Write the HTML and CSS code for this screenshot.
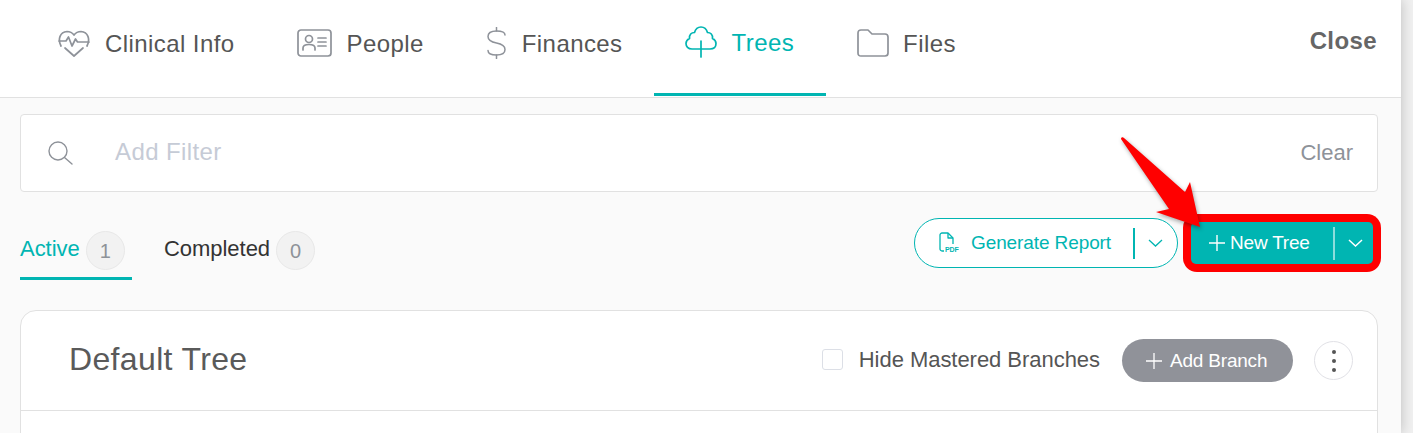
FILE: index.html
```html
<!DOCTYPE html>
<html lang="en">
<head>
    <meta charset="UTF-8">
    <meta name="viewport" content="width=device-width, initial-scale=1.0">
    <title>Trees</title>
    <link rel="stylesheet" href="styles.css">
</head>
<body>
    <div class="panel">
        <div class="topbar">
            <div class="nav">
                <a class="nav-item">
                    <svg class="nav-icon" width="32" height="32" viewBox="0 0 32 32" fill="none" stroke="currentColor" stroke-width="1.7" stroke-linejoin="round" stroke-linecap="round">
                        <path d="M3 19 C-0.5 12 2 5 9 4.5 C12 4.5 14.5 6 16 8 C17.5 6 20 4.5 23 4.5 C30 5 32.5 12 29 19"/>
                        <path d="M1 14 H8 L10.5 10 L14 19 L17.5 12 L19.5 15 H31"/>
                        <path d="M7 21 L16 29 L25 21"/>
                    </svg>
                    <span>Clinical Info</span>
                </a>
                <a class="nav-item">
                    <svg class="nav-icon" width="35" height="28" viewBox="0 0 35 28" fill="none" stroke="currentColor" stroke-width="1.7" stroke-linecap="round">
                        <rect x="1" y="1" width="33" height="26" rx="3"/>
                        <circle cx="12" cy="10" r="3.5"/>
                        <path d="M6 21 V19 C6 16 9 15.5 12 15.5 C15 15.5 18 16 18 19 V21"/>
                        <path d="M21 9 H29 M21 13 H29 M21 17 H29"/>
                    </svg>
                    <span>People</span>
                </a>
                <a class="nav-item">
                    <svg class="nav-icon" width="21" height="32" viewBox="0 0 21 32" fill="none" stroke="currentColor" stroke-width="1.5" stroke-linecap="round">
                        <path d="M19 8 C19 5 15 4 10.5 4 C5 4 2 6 2 9.5 C2 13 5 15 10.5 16 C16 17 19 19 19 22.5 C19 26 16 28 10.5 28 C5 28 2 26.5 2 23.5"/>
                        <path d="M10.5 0.5 V4 M10.5 28 V31.5"/>
                    </svg>
                    <span>Finances</span>
                </a>
                <a class="nav-item active">
                    <svg class="nav-icon" width="32" height="32" viewBox="0 0 32 32" fill="none" stroke="currentColor" stroke-width="1.7" stroke-linecap="round" stroke-linejoin="round">
                        <path d="M16 23 H7 C3 23 1 20.5 1 17.5 C1 15 2.5 13.5 4.5 12.5 C4 8.5 6.5 6.5 9.5 6.5 C10.5 3 13 1 16 1 C19 1 21.5 3 22.5 6.5 C25.5 6.5 28 8.5 27.5 12.5 C29.5 13.5 31 15 31 17.5 C31 20.5 29 23 25 23 H16"/>
                        <path d="M16 15 V31"/>
                    </svg>
                    <span>Trees</span>
                </a>
                <a class="nav-item">
                    <svg class="nav-icon" width="32" height="28" viewBox="0 0 32 28" fill="none" stroke="currentColor" stroke-width="1.7" stroke-linejoin="round">
                        <path d="M1 4 C1 2 2 1 4 1 H11 L15 5 H28 C30 5 31 6 31 8 V24 C31 26 30 27 28 27 H4 C2 27 1 26 1 24 Z"/>
                    </svg>
                    <span>Files</span>
                </a>
            </div>
            <a class="close-link">Close</a>
        </div>

        <div class="content">
            <div class="filter-box">
                <svg class="search-icon" width="25" height="24" viewBox="0 0 25 24" fill="none" stroke="currentColor" stroke-width="1.4" stroke-linecap="round">
                    <circle cx="10" cy="10" r="9"/>
                    <path d="M16.5 16.5 L24 23"/>
                </svg>
                <span class="filter-text">Add Filter</span>
                <span class="clear-link">Clear</span>
            </div>

            <div class="toolbar">
                <div class="sub-tabs">
                    <div class="sub-tab active">Active <span class="count">1</span></div>
                    <div class="sub-tab">Completed <span class="count">0</span></div>
                </div>
                <div class="actions">
                    <div class="btn btn-report">
                        <svg class="pdf-icon" width="20" height="22" viewBox="0 0 20 22" fill="none" stroke="currentColor" stroke-width="1.3" stroke-linejoin="round">
                            <path d="M5 19 H3 C2 19 1 18 1 17 V3 C1 2 2 1 3 1 H9 L14 6 V12"/>
                            <path d="M9 1 V6 H14"/>
                            <text x="6" y="19.5" class="pdf-label">PDF</text>
                        </svg>
                        <span class="btn-label">Generate Report</span>
                        <span class="btn-sep"></span>
                        <svg class="chevron" width="15" height="8" viewBox="0 0 15 8" fill="none" stroke="currentColor" stroke-width="1.3"><path d="M1 1 L7.5 7 L14 1"/></svg>
                    </div>
                    <div class="new-tree-wrap">
                        <div class="btn btn-new">
                            <svg class="plus" width="16" height="16" viewBox="0 0 16 16" stroke="currentColor" stroke-width="1.4"><path d="M8 0 V16 M0 8 H16"/></svg>
                            <span class="btn-label">New Tree</span>
                            <span class="btn-sep"></span>
                            <svg class="chevron" width="15" height="8" viewBox="0 0 15 8" fill="none" stroke="currentColor" stroke-width="1.5"><path d="M1 1 L7.5 7 L14 1"/></svg>
                        </div>
                    </div>
                </div>
            </div>

            <div class="card">
                <div class="card-header">
                    <h2 class="card-title">Default Tree</h2>
                    <label class="hide-check"><span class="checkbox"></span>Hide Mastered Branches</label>
                    <div class="btn-branch">
                        <svg width="16" height="16" viewBox="0 0 16 16" stroke="currentColor" stroke-width="1.3"><path d="M8 0 V16 M0 8 H16"/></svg>
                        Add Branch
                    </div>
                    <div class="kebab"><i></i><i></i><i></i></div>
                </div>
            </div>
        </div>
    </div>

    <svg class="callout" width="100" height="110" viewBox="0 0 100 110">
        <path d="M1 9 C1 7 3 7 4 8 L65 62 L70 52 L80 97 L36 82 L49 79 L1 9 Z" fill="#ff0000"/>
    </svg>
</body>
</html>
```

FILE: styles.css
```css
* {
    box-sizing: border-box;
}
html, body {
    margin: 0;
    height: 100%;
    overflow: hidden;
}
body {
    background: #f0f0f0;
    font-family: "Liberation Sans", Arial, sans-serif;
    position: relative;
}
.panel {
    width: 1401px;
    height: 433px;
    background: #fafafa;
    box-shadow: 0 0 12px rgba(0, 0, 0, 0.22);
    overflow: hidden;
}
.topbar {
    display: flex;
    justify-content: space-between;
    height: 98px;
    padding: 0 24px 0 27px;
    background: #fff;
    border-bottom: 1px solid #e1e1e1;
}
.nav {
    display: flex;
}
.nav-item {
    display: flex;
    align-items: center;
    gap: 15px;
    height: 97px;
    padding: 0 31px 9px;
    border-bottom: 3px solid transparent;
    color: #555;
    font-size: 24px;
    letter-spacing: 0.42px;
}
.nav-item span {
    margin-top: 2px;
}
.nav-icon {
    color: #8e9299;
}
.nav-item.active {
    color: #00b5b2;
    border-bottom: 3px solid #00b5b2;
    margin-bottom: 1px;
    height: 96px;
    padding-right: 32px;
}
.nav-item.active + .nav-item {
    gap: 14px;
}
.nav-item.active .nav-icon {
    color: #00b5b2;
}
.close-link {
    margin-top: 27px;
    font-size: 24px;
    font-weight: bold;
    letter-spacing: 0.4px;
    color: #666;
}
.content {
    padding: 16px 23px 0 20px;
}
.filter-box {
    display: flex;
    align-items: center;
    height: 78px;
    padding: 0 24px 0 27px;
    background: #fff;
    border: 1px solid #e1e1e1;
    border-radius: 4px;
}
.search-icon {
    color: #8e9299;
}
.filter-text {
    flex: 1;
    margin-left: 42px;
    margin-bottom: 2px;
    font-size: 24px;
    letter-spacing: 0.4px;
    color: #c6cbd6;
}
.clear-link {
    font-size: 22px;
    color: #8e9299;
}
.toolbar {
    display: flex;
    justify-content: space-between;
    height: 118px;
}
.sub-tabs {
    display: flex;
    gap: 32px;
    margin-top: 39px;
}
.sub-tab {
    display: flex;
    align-items: flex-start;
    gap: 6px;
    height: 49px;
    font-size: 22px;
    letter-spacing: -0.04px;
    line-height: 36px;
    color: #333;
}
.sub-tab.active {
    color: #00b5b2;
    width: 112px;
    border-bottom: 3px solid #00b5b2;
}
.count {
    width: 39px;
    height: 39px;
    border: 1px solid #e8e8e8;
    border-radius: 50%;
    background: #f2f2f2;
    color: #8e9299;
    font-size: 20px;
    line-height: 39px;
    text-align: center;
}
.actions {
    display: flex;
    align-items: flex-start;
    margin-right: -3px;
    margin-top: 22px;
}
.btn {
    display: flex;
    align-items: center;
    font-size: 19px;
    letter-spacing: -0.1px;
}
.btn-report {
    width: 264px;
    height: 50px;
    margin-top: 4px;
    padding-left: 24px;
    background: #fff;
    border: 1px solid #00b5b2;
    border-radius: 25px;
    color: #00b5b2;
}
.pdf-label {
    font-size: 7px;
    font-weight: bold;
    fill: currentColor;
    stroke: none;
}
.btn-report .btn-label {
    margin-left: 12px;
}
.btn-report .btn-sep {
    width: 2px;
    height: 31px;
    margin: 0 13px 0 22px;
    background: #00b5b2;
}
.new-tree-wrap {
    width: 198px;
    height: 58px;
    padding: 8px;
    margin-left: 5px;
    background: #ff0000;
    border-radius: 14px;
}
.btn-new {
    width: 182px;
    height: 42px;
    padding-left: 18px;
    background: #00b5b2;
    border-radius: 5px;
    color: #fff;
    letter-spacing: -0.2px;
}
.btn-new .btn-label {
    margin-left: 5px;
}
.btn-new .btn-sep {
    width: 2px;
    height: 33px;
    margin: 0 13px 0 23px;
    background: rgba(255, 255, 255, 0.55);
}
.card {
    height: 200px;
    background: #fff;
    border: 1px solid #e1e1e1;
    border-radius: 16px;
}
.card-header {
    display: flex;
    align-items: center;
    height: 100px;
    padding: 0 24px 0 48px;
    border-bottom: 1px solid #e1e1e1;
}
.card-title {
    flex: 1;
    margin: 0 0 2px;
    font-size: 32px;
    font-weight: normal;
    letter-spacing: 0.35px;
    color: #5a5a5a;
}
.hide-check {
    display: flex;
    align-items: center;
    gap: 16px;
    margin-bottom: 2px;
    font-size: 22px;
    letter-spacing: -0.04px;
    color: #555;
}
.checkbox {
    width: 21px;
    height: 21px;
    background: #fff;
    border: 1px solid #dcdfe6;
    border-radius: 3px;
}
.btn-branch {
    display: flex;
    align-items: center;
    gap: 8px;
    width: 171px;
    height: 43px;
    margin-left: 22px;
    padding-left: 24px;
    background: #909299;
    border-radius: 22px;
    color: #fff;
    font-size: 19px;
    letter-spacing: -0.2px;
}
.kebab {
    display: flex;
    flex-direction: column;
    align-items: center;
    justify-content: center;
    gap: 5px;
    width: 39px;
    height: 39px;
    margin-left: 21px;
    background: #fff;
    border: 1px solid #e1e1e6;
    border-radius: 50%;
}
.kebab i {
    width: 4px;
    height: 4px;
    background: #555;
    border-radius: 50%;
}
.callout {
    position: absolute;
    left: 1120px;
    top: 130px;
    filter: drop-shadow(1px 2px 2px rgba(0, 0, 0, 0.35));
}
```
